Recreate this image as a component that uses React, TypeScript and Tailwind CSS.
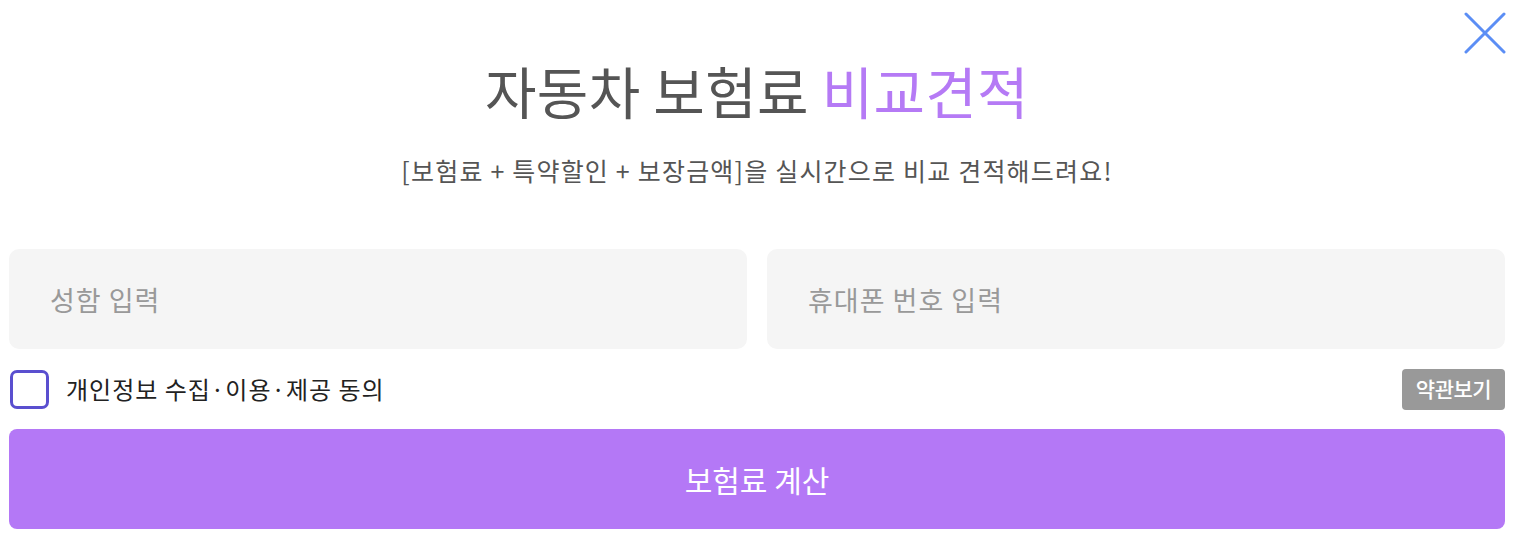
export default function App() {
  return (
    <main
      className="relative bg-white w-[1530px] h-[546px] px-[9px] pt-[56px]"
      style={{ fontFamily: '"Noto Sans CJK KR", "Noto Sans", sans-serif' }}
    >
      {/* Close button */}
      <button className="absolute right-[24px] top-[12px] w-[42px] h-[42px] flex items-center justify-center">
        <svg width="42" height="42" viewBox="0 0 42 42" fill="none">
          <path d="M2 2 L40 40 M40 2 L2 40" stroke="#5b8ef5" strokeWidth="3" strokeLinecap="round" />
        </svg>
      </button>

      <div className="w-[1496px]">
        <h1 className="text-center text-[56px] leading-[68px] font-normal text-[#555555] tracking-[0.3px]">
          자동차 보험료 <span className="text-[#b57af5]">비교견적</span>
        </h1>
        <p className="mt-[30px] text-center text-[25px] leading-[32px] text-[#555555] tracking-[1.2px]">
          [보험료 + 특약할인 + 보장금액]을 실시간으로 비교 견적해드려요!
        </p>

        <div className="mt-[63px] grid grid-cols-2 gap-5">
          <input
            type="text"
            placeholder="성함 입력"
            className="h-[100px] rounded-[10px] bg-[#f5f5f5] px-[41px] text-[27px] tracking-[1px] text-[#333] placeholder:text-[#999999] focus:outline-none"
          />
          <input
            type="tel"
            placeholder="휴대폰 번호 입력"
            className="h-[100px] rounded-[10px] bg-[#f5f5f5] px-[41px] text-[27px] tracking-[1px] text-[#333] placeholder:text-[#999999] focus:outline-none"
          />
        </div>

        <div className="mt-[19px] flex items-center justify-between h-[42px]">
          <label className="flex items-center gap-[17px]">
            <span className="ml-px w-[39px] h-[39px] rounded-[7px] border-[3px] border-[#5a4fcf] bg-white" />
            <span className="text-[24px] text-[#222222] tracking-[1px]">개인정보 수집·이용·제공 동의</span>
          </label>
          <button className="h-[41px] w-[103px] rounded-[4px] bg-[#999999] text-white text-[21px] font-medium tracking-[-0.5px]">
            약관보기
          </button>
        </div>

        <button className="mt-[19px] w-full h-[100px] rounded-[8px] bg-[#b478f6] text-white text-[30px] font-normal">
          보험료 계산
        </button>
      </div>
    </main>
  );
}
